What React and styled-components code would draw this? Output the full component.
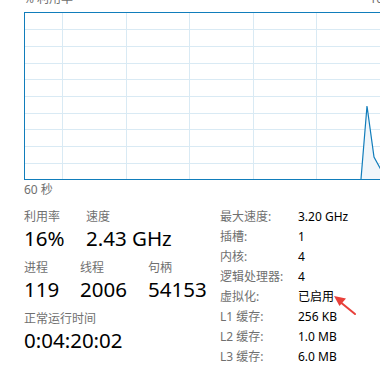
import styled, { createGlobalStyle } from 'styled-components'

const GlobalStyle = createGlobalStyle`
  html, body {
    margin: 0;
    background: #ffffff;
    overflow: hidden;
  }
  body {
    font-family: "Noto Sans", "Noto Sans CJK SC", sans-serif;
  }
`

const Page = styled.div`
  position: relative;
  width: 400px;
  padding-left: 24px;
  box-sizing: border-box;
`

const ChartHeader = styled.div`
  display: flex;
  justify-content: space-between;
  margin-top: -7px;
  margin-bottom: 7px;
  font-size: 12px;
  line-height: 12px;
  color: #707070;
`

const ChartBox = styled.svg`
  display: block;
`

const AxisLabel = styled.div`
  margin-top: 2px;
  font-size: 12px;
  line-height: 16px;
  color: #707070;
`

const Stats = styled.div`
  display: grid;
  grid-template-columns: 196px auto;
  margin-top: 11px;
`

const LeftCol = styled.div`
  display: flex;
  flex-direction: column;
  gap: 9px;
`

const StatRow = styled.div`
  display: flex;
`

const Stat = styled.div`
  display: flex;
  flex-direction: column;
  width: ${({ $w }) => ($w ? `${$w}px` : 'auto')};
`

const Label = styled.div`
  font-size: 12px;
  line-height: 16px;
  color: #707070;
  white-space: nowrap;
`

const Value = styled.div`
  font-size: 20.5px;
  line-height: 26px;
  color: #000000;
  white-space: nowrap;
`

const Specs = styled.div`
  display: grid;
  grid-template-columns: 78px auto;
  align-content: start;
  margin-top: -2.5px;
  font-size: 12px;
  line-height: 20px;
`

const SpecKey = styled.div`
  color: #707070;
  white-space: nowrap;
`

const SpecVal = styled.div`
  color: #000000;
  white-space: nowrap;
`

const Arrow = styled.svg`
  position: absolute;
  left: 326px;
  top: 296px;
`

const W = 376
const H = 168
const rows = Array.from({ length: 9 }, (_, i) => 12.5 + (i + 1) * 16.7 - 12)
const cols = [38, 101.5, 165, 228.5, 292, 355.5]

const Chart = () => (
  <ChartBox width={W} height={H} viewBox={`0 0 ${W} ${H}`}>
    {rows.map((y) => (
      <line key={y} x1="0" x2={W} y1={Math.round(y) + 0.5} y2={Math.round(y) + 0.5} stroke="#d9eaf4" strokeWidth="1" />
    ))}
    {cols.map((x) => (
      <line key={x} x1={Math.round(x) + 0.5} x2={Math.round(x) + 0.5} y1="0" y2={H} stroke="#d9eaf4" strokeWidth="1" />
    ))}
    <polygon points="337,167 343,94 350,145 356,156 362,166 376,167" fill="#f1f6fa" />
    <polyline points="337,167 343,94 350,145 356,156 362,166" fill="none" stroke="#117dbb" strokeWidth="1.2" />
    <line x1="0.5" y1="0" x2="0.5" y2={H} stroke="#117dbb" strokeWidth="1" />
    <line x1="0" y1="0.5" x2={W} y2="0.5" stroke="#117dbb" strokeWidth="1" />
    <line x1="0" y1={H - 0.5} x2={W} y2={H - 0.5} stroke="#117dbb" strokeWidth="1" />
  </ChartBox>
)

const specs = [
  ['最大速度:', '3.20 GHz'],
  ['插槽:', '1'],
  ['内核:', '4'],
  ['逻辑处理器:', '4'],
  ['虚拟化:', '已启用'],
  ['L1 缓存:', '256 KB'],
  ['L2 缓存:', '1.0 MB'],
  ['L3 缓存:', '6.0 MB'],
]

const App = () => (
  <>
    <GlobalStyle />
    <Page>
      <ChartHeader>
        <span>% 利用率</span>
        <span>100%</span>
      </ChartHeader>
      <Chart />
      <AxisLabel>60 秒</AxisLabel>
      <Stats>
        <LeftCol>
          <StatRow>
            <Stat $w={62}>
              <Label>利用率</Label>
              <Value>16%</Value>
            </Stat>
            <Stat>
              <Label>速度</Label>
              <Value>2.43 GHz</Value>
            </Stat>
          </StatRow>
          <StatRow>
            <Stat $w={56}>
              <Label>进程</Label>
              <Value>119</Value>
            </Stat>
            <Stat $w={68}>
              <Label>线程</Label>
              <Value>2006</Value>
            </Stat>
            <Stat>
              <Label>句柄</Label>
              <Value>54153</Value>
            </Stat>
          </StatRow>
          <StatRow>
            <Stat>
              <Label>正常运行时间</Label>
              <Value>0:04:20:02</Value>
            </Stat>
          </StatRow>
        </LeftCol>
        <Specs>
          {specs.map(([k, v]) => (
            <>
              <SpecKey key={k}>{k}</SpecKey>
              <SpecVal key={k + 'v'}>{v}</SpecVal>
            </>
          ))}
        </Specs>
      </Stats>
      <Arrow width="34" height="30" viewBox="0 0 34 30">
        <line x1="29" y1="25" x2="13" y2="12" stroke="#e8403a" strokeWidth="2" strokeLinecap="round" />
        <polygon points="8,7 20,9.5 13.5,17" fill="#e8403a" />
      </Arrow>
    </Page>
  </>
)

export default App
